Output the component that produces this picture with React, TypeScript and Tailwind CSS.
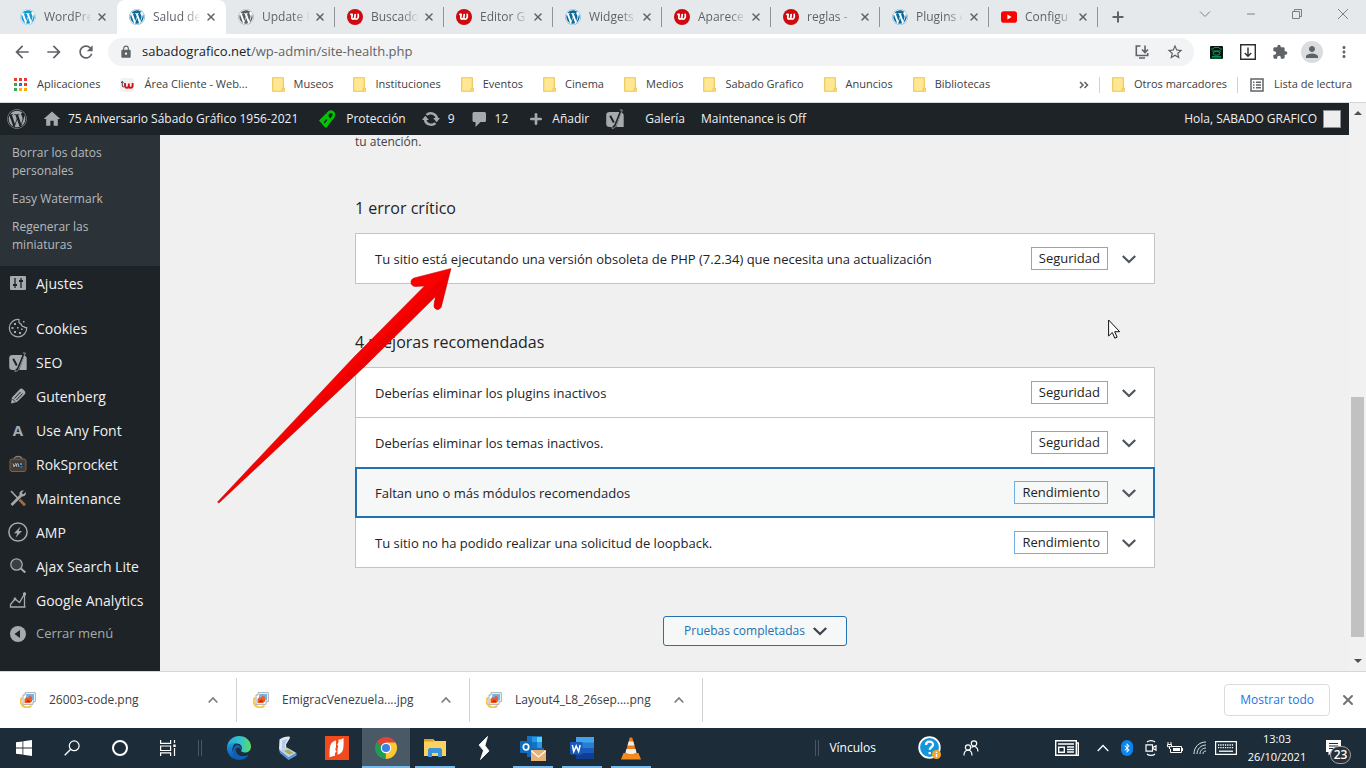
import React from 'react';
import { FaBluetoothB, FaWordpress } from 'react-icons/fa';
import {
  MdArrowBack,
  MdArrowForward,
  MdExtension,
  MdHome,
  MdLock,
  MdMoreVert,
  MdPerson,
  MdRefresh,
  MdStarBorder,
} from 'react-icons/md';
import { Minus, Plus, X } from 'lucide-react';

/* ---------- small drawings ---------- */

const WebempresaIcon = () => (
  <svg viewBox="0 0 16 16" className="size-4 shrink-0">
    <circle cx="8" cy="8" r="8" fill="#cc0a0f" />
    <path d="M3.9 5.4h1.3l-.4 3.3c-.1 1.8 2.3 1.8 2.8 0l.6-3-.4 3c0 1.9 2.5 1.9 3.2 0 .5-1.2.5-2.1.2-3.3" fill="none" stroke="#fff" strokeWidth="1.7" strokeLinecap="round" strokeLinejoin="round" />
  </svg>
);

const YoutubeIcon = () => (
  <svg viewBox="0 0 16 16" className="size-4 shrink-0">
    <rect y="2.3" width="16" height="11.4" rx="2.8" fill="#f00" />
    <path d="M6.4 5.6v4.8L10.6 8z" fill="#fff" />
  </svg>
);

const WpIcon = ({ className }: { className: string }) => (
  <span className={`grid size-4 shrink-0 place-items-center rounded-full bg-white ${className}`}>
    <FaWordpress className="size-4" />
  </span>
);

const FolderIcon = () => (
  <svg viewBox="0 0 13 15" className="h-[15px] w-[13px] shrink-0">
    <path d="M.7.7h10.6v10.6h1v3H.7z" fill="#ffe793" stroke="#ecc652" strokeWidth="1.1" />
    <path d="M10 14V11.4h1.5" fill="none" stroke="#ecc652" />
  </svg>
);

const AppsIcon = () => (
  <svg viewBox="0 0 13 13" className="size-[13px] shrink-0">
    <path d="M0 0h3v3H0zM5 0h3v3H5zM10 0h3v3h-3z" fill="#ea3c2f" />
    <path d="M0 5h3v3H0z" fill="#34a853" />
    <path d="M5 5h3v3H5z" fill="#1a73e8" />
    <path d="M10 5h3v3h-3z" fill="#ea3c2f" />
    <path d="M0 10h3v3H0z" fill="#34a853" />
    <path d="M5 10h3v3H5zM10 10h3v3h-3z" fill="#fbae08" />
  </svg>
);

const ClienteIcon = () => (
  <svg viewBox="0 0 14 14" className="size-3.5 shrink-0">
    <rect width="14" height="14" rx="3" fill="#f1f1f1" />
    <path d="M1 4.4h2.600M2.300 3v4c0 1.500.8 2 1.600 2" fill="none" stroke="#555" strokeWidth="1.100" />
    <path d="M5 5v2.500c0 3 3.600 3 3.800.300V5.500v2.300c.2 2.700 3.800 2.700 3.800-.300V5" fill="none" stroke="#d3121b" strokeWidth="1.900" />
  </svg>
);

const YoastIcon = ({ className }: { className: string }) => (
  <svg viewBox="0 0 20 20" className={className}>
    <path d="M4.500 3h10.200l-5 15H4.500a3.300 3.300 0 0 1-3.300-3.200V6.300A3.300 3.300 0 0 1 4.500 3zM16.400 3.600c1.500.500 2.300 1.500 2.300 3V18h-7.400z" fill="#a7aaad" />
    <path d="M5.200 6.800l3.600 6.700M16.400.8L10.400 15.500c-.7 1.900-1.700 2.700-3.200 2.800" fill="none" stroke="#1d2327" strokeWidth="2" />
    <path d="M14.800 1h2.600L11.300 16c-1 2.500-2 3.200-4.300 3.400V17" fill="none" stroke="#a7aaad" strokeWidth=".8" />
  </svg>
);

const Chevron = ({ className }: { className: string }) => (
  <svg viewBox="0 0 20 20" className={className}>
    <path d="M3.800 7l6.200 6 6.200-6" fill="none" stroke="currentColor" strokeWidth="2.300" />
  </svg>
);

const ShieldLockIcon = () => (
  <svg viewBox="0 0 18 18" className="size-[18px] shrink-0">
    <path d="M1 10.500L8 3.500l6 7-5.500 7H7z" fill="#00c400" />
    <path d="M9.500 6.500c-1-4 3.500-6.500 6-3.500 1.200 2 .3 4-2.500 6.500" fill="none" stroke="#00c400" strokeWidth="2.600" />
    <path d="M6.500 12.500l2-2.500" stroke="#1d2327" strokeWidth="1.500" strokeLinecap="round" />
  </svg>
);

const UpdateIcon = () => (
  <svg viewBox="0 0 20 20" className="size-[18px] shrink-0 text-[#a7aaad]">
    <path d="M5 5.500A7 7 0 0 1 16.700 9.500M15 14.500A7 7 0 0 1 3.300 10.500" fill="none" stroke="currentColor" strokeWidth="2.800" />
    <path d="M12.400 9h7.600L16.300 13.600zM0 11h7.600L3.700 6.400z" fill="currentColor" />
  </svg>
);

const CommentIcon = () => (
  <svg viewBox="0 0 16 16" className="size-4 shrink-0">
    <path d="M3 1h10.500a1.500 1.500 0 0 1 1.500 1.500v7a1.500 1.500 0 0 1-1.500 1.500H9.500l-5 5V11H3a1.500 1.500 0 0 1-1.500-1.500v-7A1.500 1.500 0 0 1 3 1z" fill="#a7aaad" />
  </svg>
);

const PhotoFileIcon = () => (
  <svg viewBox="0 0 16 16" className="size-4 shrink-0">
    <path d="M1.800 5.500C-.5 9.500 1 14.700 6 15.300c2.500.2 4-.3 5.500-1.500" fill="none" stroke="#f6c445" strokeWidth="1.800" />
    <path d="M3 3h2V.700h10.300v9H13v2.600H3z" fill="#fff" stroke="#a5a9ad" strokeWidth="1" />
    <path d="M6.200 2h7.800v6.500H6.200z" fill="#6fb4e8" />
    <path d="M4.500 11V7l2-2 1.500 1L9.700 3.500 12 5v4.500L10 11z" fill="#ee5a24" />
    <path d="M6 9.500l2-2 2 1.500v1H6z" fill="#c33110" />
  </svg>
);

/* ---------- browser chrome ---------- */

const tabs = [
  { title: 'WordPre', icon: <WpIcon className="text-[#1597d4]" /> },
  { title: 'Salud de', icon: <WpIcon className="text-[#0a6a9c]" />, active: true },
  { title: 'Update P', icon: <WpIcon className="text-[#5b5e61]" /> },
  { title: 'Buscado', icon: <WebempresaIcon /> },
  { title: 'Editor G', icon: <WebempresaIcon /> },
  { title: 'Widgets', icon: <WpIcon className="text-[#0a6a9c]" /> },
  { title: 'Aparece', icon: <WebempresaIcon /> },
  { title: 'reglas -', icon: <WebempresaIcon /> },
  { title: 'Plugins ‹', icon: <WpIcon className="text-[#0a6a9c]" /> },
  { title: 'Configu', icon: <YoutubeIcon /> },
];

const TabStrip = () => (
  <div className="flex h-[34px] shrink-0 items-stretch bg-[#e6e9ec] pl-2">
    {tabs.map((tab, i) => (
      <div
        key={tab.title}
        className={`flex w-[109px] items-center pl-3 text-[12px] text-[#5f6368] ${tab.active ? 'rounded-t-lg bg-white' : ''}`}
      >
        {tab.icon}
        <span className="ml-2 w-12 whitespace-nowrap [mask-image:linear-gradient(to_right,black_65%,transparent)]">
          {tab.title}
        </span>
        <button aria-label="Cerrar pestaña" className="ml-0.5 grid size-4 place-items-center text-[#5f6368]">
          <X className="size-3" strokeWidth={3} />
        </button>
        {i > 1 && <span className="ml-auto h-5 w-px bg-[#8f9398]" />}
      </div>
    ))}
    <button aria-label="Nueva pestaña" className="grid w-10 place-items-center text-[#5f6368]">
      <Plus className="size-4" strokeWidth={3} />
    </button>
    <div className="ml-auto flex items-center pb-1.5 text-[#7c8085]">
      <button aria-label="Buscar pestañas" className="grid h-7 w-[46px] place-items-center">
        <svg viewBox="0 0 12 12" className="size-3"><path d="M1 3.500l5 5 5-5" fill="none" stroke="currentColor" /></svg>
      </button>
      <button aria-label="Minimizar" className="grid h-7 w-[46px] place-items-center">
        <Minus className="size-3" strokeWidth={2} />
      </button>
      <button aria-label="Restaurar" className="grid h-7 w-[46px] place-items-center">
        <svg viewBox="0 0 12 12" className="size-3"><path d="M1.500 3.500h7v7h-7zM3.500 3.500v-2h7v7h-2" fill="none" stroke="currentColor" /></svg>
      </button>
      <button aria-label="Cerrar" className="grid h-7 w-[46px] place-items-center">
        <svg viewBox="0 0 12 12" className="size-3"><path d="M1 1l10 10M11 1L1 11" stroke="currentColor" /></svg>
      </button>
    </div>
  </div>
);

const Toolbar = () => (
  <div className="flex h-[35px] shrink-0 items-center bg-white pt-px pr-1.5 pl-1.5 text-[#5f6368]">
    <button aria-label="Atrás" className="grid w-8 place-items-center"><MdArrowBack className="size-5" /></button>
    <button aria-label="Adelante" className="grid w-8 place-items-center"><MdArrowForward className="size-5" /></button>
    <button aria-label="Recargar" className="grid w-8 place-items-center"><MdRefresh className="size-5" /></button>
    <div className="ml-1.5 flex h-7 flex-1 items-center rounded-full bg-[#f1f3f4] pr-2.5 pl-[11px] text-[13px]">
      <MdLock className="size-3.5" />
      <span className="ml-[9px]">
        <span className="text-[#202124]">sabadografico.net</span>/wp-admin/site-health.php
      </span>
      <button aria-label="Instalar" className="ml-auto">
        <svg viewBox="0 0 16 16" className="size-4">
          <path d="M6.500 2H2.300v9.500h11.400V9M11 1.500V8M8 5.500l3 3 3-3M5 14h6" fill="none" stroke="currentColor" strokeWidth="1.600" />
        </svg>
      </button>
      <button aria-label="Añadir a marcadores" className="ml-4"><MdStarBorder className="size-[18px]" /></button>
    </div>
    <div className="ml-1.5 flex items-center">
      <button aria-label="Extensión" className="grid w-8 place-items-center">
        <svg viewBox="0 0 13 13" className="size-[13px]">
          <rect width="13" height="13" rx="1" fill="#06170f" />
          <path d="M1 3h2l1-1.500h5L10 3h2M2 5h9M2 10.500h9M1.500 12h10" stroke="#149a5b" fill="none" strokeWidth=".9" />
          <ellipse cx="6.500" cy="7.300" rx="3.500" ry="1.900" stroke="#149a5b" fill="none" />
        </svg>
      </button>
      <button aria-label="Descargas" className="grid w-8 place-items-center text-[#2c2e31]">
        <svg viewBox="0 0 16 16" className="size-4">
          <path d="M.7.700h14.600v14.600H.700zM8 3.500v8.500M4.800 9L8 12.200 11.200 9" fill="none" stroke="currentColor" strokeWidth="1.400" />
        </svg>
      </button>
      <button aria-label="Extensiones" className="grid w-8 place-items-center"><MdExtension className="size-4" /></button>
      <button aria-label="Perfil" className="grid w-8 place-items-center">
        <span className="grid size-[22px] place-items-center rounded-full bg-[#dadce0]"><MdPerson className="size-[18px]" /></span>
      </button>
      <button aria-label="Menú" className="grid w-8 place-items-center"><MdMoreVert className="size-[18px]" /></button>
    </div>
  </div>
);

const bookmarks = ['Museos', 'Instituciones', 'Eventos', 'Cinema', 'Medios', 'Sabado Grafico', 'Anuncios', 'Bibliotecas'];

const BookmarksBar = () => (
  <nav className="flex h-[34px] shrink-0 items-center border-b border-[#d5d7da] bg-white px-3.5 pb-0.5 text-[11px] whitespace-nowrap text-[#3c4043]">
    <a href="#" className="flex items-center gap-2.5"><AppsIcon />Aplicaciones</a>
    <a href="#" className="mr-1 ml-5 flex items-center gap-2.5"><ClienteIcon />Área Cliente - Web...</a>
    {bookmarks.map((name) => (
      <a key={name} href="#" className="ml-5 flex items-center gap-[9px]"><FolderIcon />{name}</a>
    ))}
    <button aria-label="Más marcadores" className="ml-auto text-[#5f6368]">
      <svg viewBox="0 0 10 8" className="h-2 w-2.5"><path d="M1 1l3 3-3 3M5.500 1l3 3-3 3" fill="none" stroke="currentColor" strokeWidth="1.500" /></svg>
    </button>
    <span className="mr-3 ml-2.5 h-4 w-px bg-[#cfd2d6]" />
    <a href="#" className="flex items-center gap-[9px]"><FolderIcon />Otros marcadores</a>
    <span className="mr-3 ml-2.5 h-4 w-px bg-[#cfd2d6]" />
    <a href="#" className="flex items-center gap-2.5">
      <svg viewBox="0 0 14 14" className="size-3.5 text-[#5f6368]">
        <path d="M1 1h12v12H1zM3 4.300h1.500M6 4.300h5M3 7h1.500M6 7h5M3 9.700h1.500M6 9.700h5" fill="none" stroke="currentColor" strokeWidth="1.500" />
      </svg>
      Lista de lectura
    </a>
  </nav>
);

/* ---------- WordPress admin ---------- */

const AdminBar = () => (
  <div className="flex h-8 shrink-0 items-center bg-[#1d2327] pr-2 pl-[7px] text-[12px] whitespace-nowrap text-[#f0f0f1]">
    <a href="#" aria-label="Acerca de WordPress"><FaWordpress className="size-5 text-[#a7aaad]" /></a>
    <a href="#" className="ml-[15px] flex items-center gap-1.5"><MdHome className="size-5 text-[#a7aaad]" />75 Aniversario Sábado Gráfico 1956-2021</a>
    <a href="#" className="ml-5 flex items-center gap-2.5"><ShieldLockIcon />Protección</a>
    <a href="#" className="ml-4 flex items-center gap-2"><UpdateIcon />9</a>
    <a href="#" className="ml-4 flex items-center gap-2"><CommentIcon />12</a>
    <a href="#" className="ml-5 flex items-center gap-2"><Plus className="size-4 text-[#a7aaad]" strokeWidth={4} />Añadir</a>
    <a href="#" aria-label="SEO" className="ml-4"><YoastIcon className="size-5" /></a>
    <a href="#" className="ml-5">Galería</a>
    <a href="#" className="ml-4">Maintenance is Off</a>
    <a href="#" className="ml-auto flex items-center gap-1.5">
      Hola, SABADO GRAFICO
      <span className="size-[18px] border border-[#8c8f94] bg-[#eee]" />
    </a>
  </div>
);

const menu = [
  {
    label: 'Cookies',
    icon: (
      <svg viewBox="0 0 20 20" className="size-5">
        <path d="M11 1.500a8.700 8.700 0 1 0 7.700 8c-1.200.4-2.300 0-2.800-1-1.500.2-2.600-.6-2.500-2.200-1.800-.5-2.800-2.300-2.400-4.800z" fill="none" stroke="#a7aaad" strokeWidth="1.200" />
        <path d="M6 5h2v2H6zM3.500 9h2v2h-2zM9 9h1.600v1.600H9zM6 13h2v2H6zM11 14h2v2h-2zM13 10.500h1.600v1.600H13zM15 3h1.500v1.500H15z" fill="#a7aaad" />
      </svg>
    ),
  },
  { label: 'SEO', icon: <YoastIcon className="size-5" /> },
  {
    label: 'Gutenberg',
    icon: (
      <svg viewBox="0 0 20 20" className="size-5">
        <path d="M3 17.500l1-6 7.500-8c1-1.100 2.500-1.200 3.500-.2l1.700 1.700c1 1 .9 2.400-.1 3.400L9 16z" fill="#a7aaad" />
        <path d="M6.500 12.500l6-6.500M8.500 14l6-6.500M4.500 13l2.500 2.500" stroke="#1d2327" strokeWidth="1" />
      </svg>
    ),
  },
  { label: 'Use Any Font', icon: <span aria-hidden className="text-[15px] font-bold text-[#a7aaad]">A</span> },
  {
    label: 'RokSprocket',
    icon: (
      <svg viewBox="0 0 18 18" className="size-[18px]">
        <path d="M5 4.500c0-4 8-4 8 0" fill="none" stroke="#85807a" strokeWidth="1.300" />
        <rect x="1" y="4" width="16" height="12.500" rx="2" fill="#4a3c2e" stroke="#7a6248" />
        <rect x="3.500" y="7" width="11" height="6" fill="#35393d" />
        <path d="M4 8.500l1.500 3.500M6.500 8l1.500 4M9 8.500l1 3.500M4 11.500l5-3" stroke="#b5b9bc" strokeWidth="1" />
        <path d="M11 8h2v2h-2z" fill="#3c8fd6" />
        <path d="M11.500 11h2v2h-2z" fill="#3568b9" />
      </svg>
    ),
  },
  {
    label: 'Maintenance',
    icon: (
      <svg viewBox="0 0 18 18" className="size-[18px]">
        <path d="M2.500 16L12 6.500" stroke="#a7aaad" strokeWidth="2.600" />
        <path d="M15 1.500l-2.300 2.300 1.500 1.600L16.700 3c.8 3.200-1.500 5-4.500 4.200L10.500 5.500C10 3 12 .9 15 1.500z" fill="#a7aaad" />
        <path d="M2 2l7.500 8" stroke="#a7aaad" strokeWidth="1.600" />
        <path d="M10.500 10.800l5.500 5.400" stroke="#a4693f" strokeWidth="2.800" />
      </svg>
    ),
  },
  {
    label: 'AMP',
    icon: (
      <svg viewBox="0 0 20 20" className="size-5">
        <circle cx="10" cy="10" r="9.100" fill="none" stroke="#a7aaad" strokeWidth="1.500" />
        <path d="M12.500 4.500L6 11.200h3.300L7.500 15.800 14 9h-3.300z" fill="#a7aaad" />
      </svg>
    ),
  },
  {
    label: 'Ajax Search Lite',
    icon: (
      <svg viewBox="0 0 18 18" className="size-[18px]">
        <circle cx="7.500" cy="7.500" r="5.700" fill="#3a3f44" stroke="#a7aaad" strokeWidth="1.300" />
        <path d="M11.800 11.500l4.500 4" stroke="#a7aaad" strokeWidth="2.200" />
      </svg>
    ),
  },
  {
    label: 'Google Analytics',
    icon: (
      <svg viewBox="0 0 18 18" className="size-[18px]">
        <path d="M1.500 16V13.500L6 8l4.500 3.500L15.500 3v13zM1.500 16h15" fill="none" stroke="#a7aaad" strokeWidth="1.300" />
        <circle cx="15.500" cy="3" r="1.700" fill="#a7aaad" />
        <circle cx="6" cy="8" r="1.400" fill="#a7aaad" />
      </svg>
    ),
  },
];

const MenuItem = ({ label, icon, muted }: { label: string; icon: React.ReactNode; muted?: boolean }) => (
  <a href="#" className={`flex h-[34px] items-center ${muted ? 'text-[13px] text-[#a7aaad]' : 'text-[14px] text-[#f0f0f1]'}`}>
    <span className="grid w-9 place-items-center">{icon}</span>
    {label}
  </a>
);

const Sidebar = () => (
  <nav className="w-40 shrink-0 bg-[#1d2327] whitespace-nowrap">
    <div className="bg-[#2c3338] pt-1 pb-[7px] text-[12px] leading-[18px] text-[#b5b9bd]">
      <a href="#" className="block px-3 py-[5px]">Borrar los datos<br />personales</a>
      <a href="#" className="block px-3 py-[5px]">Easy Watermark</a>
      <a href="#" className="block px-3 py-[5px]">Regenerar las<br />miniaturas</a>
    </div>
    <div className="mb-[11px]">
      <MenuItem
        label="Ajustes"
        icon={
          <svg viewBox="0 0 16 14" className="h-3.5 w-4">
            <rect width="16" height="14" rx="1" fill="#a7aaad" />
            <path d="M5 2v10M11 2v10" stroke="#1d2327" strokeWidth="1.300" />
            <path d="M3 8h4v2H3zM9 4h4v2H9z" fill="#1d2327" />
          </svg>
        }
      />
    </div>
    {menu.map((item) => <MenuItem key={item.label} label={item.label} icon={item.icon} />)}
    <MenuItem
      muted
      label="Cerrar menú"
      icon={
        <svg viewBox="0 0 16 16" className="size-4">
          <circle cx="8" cy="8" r="8" fill="#a7aaad" />
          <path d="M10 4v8L4.500 8z" fill="#1d2327" />
        </svg>
      }
    />
  </nav>
);

type Issue = { title: string; badge: string; focused?: boolean };

const critical: Issue[] = [
  { title: 'Tu sitio está ejecutando una versión obsoleta de PHP (7.2.34) que necesita una actualización', badge: 'Seguridad' },
];

const recommended: Issue[] = [
  { title: 'Deberías eliminar los plugins inactivos', badge: 'Seguridad' },
  { title: 'Deberías eliminar los temas inactivos.', badge: 'Seguridad' },
  { title: 'Faltan uno o más módulos recomendados', badge: 'Rendimiento', focused: true },
  { title: 'Tu sitio no ha podido realizar una solicitud de loopback.', badge: 'Rendimiento' },
];

const IssueList = ({ items }: { items: Issue[] }) => (
  <div className="border-x border-t border-[#c3c4c7]">
    {items.map(({ title, badge, focused }) => (
      <h4 key={title} className="border-b border-[#c3c4c7]">
        <button
          className={`relative flex h-[49px] w-full items-center pr-[15px] pl-[19px] text-left text-[13px] text-[#1d2327] ${
            focused ? 'z-10 bg-[#f6f7f7] outline-2 -outline-offset-1 outline-[#2271b1]' : 'bg-white'
          }`}
        >
          <span className="flex-1 pt-0.5">{title}</span>
          <span className="border border-[#72aee6] px-[7px] leading-[21px]">{badge}</span>
          <Chevron className="ml-[11px] size-5 text-[#50575e]" />
        </button>
      </h4>
    ))}
  </div>
);

const SiteHealth = () => (
  <main className="min-w-0 flex-1 overflow-hidden bg-[#f0f0f0] pl-px">
    <div className="mx-auto max-w-[800px]">
      <p className="text-[12px] leading-[14px] text-[#3c434a]">tu atención.</p>
      <h3 className="mt-[47px] text-[16px] leading-6 text-[#1d2327]">1 error crítico</h3>
      <div className="mt-[13px]"><IssueList items={critical} /></div>
      <h3 className="mt-[46px] text-[16px] leading-6 text-[#1d2327]">4 mejoras recomendadas</h3>
      <div className="mt-[13px]"><IssueList items={recommended} /></div>
      <div className="mt-12 flex justify-center">
        <button className="flex h-[30px] items-center gap-[5px] rounded-[3px] border border-[#2271b1] bg-[#f6f7f7] pr-4 pl-5 text-[12px] text-[#2271b1]">
          Pruebas completadas
          <Chevron className="size-5 text-[#3c434a]" />
        </button>
      </div>
    </div>
  </main>
);

const Scrollbar = () => (
  <div className="flex w-[17px] shrink-0 flex-col items-center bg-[#f1f1f1] py-[7px]">
    <svg viewBox="0 0 8 5" className="h-[5px] w-2"><path d="M0 5l4-4 4 4z" fill="#505050" /></svg>
    <div className="flex w-full flex-1 flex-col items-center">
      <div className="flex-[281]" />
      <div className="w-[13px] flex-[240] bg-[#c1c1c1]" />
      <div className="flex-[22]" />
    </div>
    <svg viewBox="0 0 8 5" className="h-[5px] w-2"><path d="M0 0l4 4 4-4z" fill="#505050" /></svg>
  </div>
);

/* Red pointer drawn over the page, and the mouse cursor */
const Annotations = () => (
  <>
    <svg viewBox="0 0 240 240" className="pointer-events-none absolute top-[162px] left-[215px] z-20 size-60">
      <path
        d="M236 3.500L199 13c-5.500 2-3 9.500 2 8.500l8.500-.500L139 92 2.500 237c.5 1 1.500 1 2 .5L149 102l71.500-70.500-1.500 8.500c-.5 5.500 6.500 6 7.500 1z"
        fill="#fb0000"
        stroke="#a11"
        strokeWidth=".5"
        strokeLinejoin="round"
      />
      <path d="M235 5L3.500 237.500 149 102l71.500-70.500-1.500 8.500c-.5 5.500 6.500 6 7.500 1z" fill="#ea0000" opacity=".75" />
    </svg>
    <svg viewBox="0 0 13 20" className="pointer-events-none absolute top-[216px] left-[1108px] z-20 h-5 w-[13px]">
      <path d="M.6 1v16l3.700-3.500 2.500 5.700 2.300-1-2.400-5.500h5z" fill="#fff" stroke="#111" strokeWidth="1" />
    </svg>
  </>
);

/* ---------- downloads and taskbar ---------- */

const downloads = ['26003-code.png', 'EmigracVenezuela....jpg', 'Layout4_L8_26sep....png'];

const Downloads = () => (
  <div className="flex h-[57px] shrink-0 items-center border-t border-[#d5d7da] bg-white pl-1 text-[12px] text-[#3c4043]">
    {downloads.map((name) => (
      <div key={name} className="flex h-11 w-[233px] items-center border-r border-[#cfd1d3] pr-[18px] pl-4">
        <PhotoFileIcon />
        <span className="ml-[13px] flex-1">{name}</span>
        <button aria-label={`Opciones de ${name}`} className="text-[#7c8085]">
          <svg viewBox="0 0 10 8" className="h-2 w-2.5"><path d="M.700 6.500L5 2l4.300 4.500" fill="none" stroke="currentColor" strokeWidth="1.800" /></svg>
        </button>
      </div>
    ))}
    <button className="mr-2.5 ml-auto h-8 rounded-sm border border-[#dadce0] px-[15px] text-[#1a73e8]">Mostrar todo</button>
    <button aria-label="Cerrar barra" className="mr-2.5 text-[#6f7377]"><X className="size-4" strokeWidth={3} /></button>
  </div>
);

const EdgeIcon = () => (
  <svg viewBox="0 0 24 24" className="size-6">
    <defs>
      <linearGradient id="edgeTop" x1="0" x2="1"><stop stopColor="#2ba7d8" /><stop offset=".6" stopColor="#35c5c9" /><stop offset="1" stopColor="#5fdc5a" /></linearGradient>
      <linearGradient id="edgeLow" x1="0" y1="0" x2="0" y2="1"><stop stopColor="#1a9de0" /><stop offset="1" stopColor="#0c4fa8" /></linearGradient>
    </defs>
    <path d="M0 11C1 4 6 0 12 0c7 0 12 5 12 10.500 0 4-3 6-6 6-2.500 0-4.500-1-3.600-2.500C16 11 14 7.500 9.500 7.500 5 7.500 1 9 0 12z" fill="url(#edgeTop)" />
    <path d="M0 12C0 8.500 4 6.500 8.500 7.200c-3 2-3.800 6-2.300 9.300 2 4.500 7.500 6 14.800 3.300C18.500 23 15 24 12 24 5 24 0 18.500 0 12z" fill="url(#edgeLow)" />
    <path d="M8.800 13c-.3 5.500 4.700 9 12.700 6-3 4.500-8 5.500-11.500 3.800C5 20 4.500 12 9.500 8.500c3 .5 5 2.500 4.900 5.500-.600-1.500-3.500-3.500-5.600-1z" fill="#0d5fb8" />
  </svg>
);

const ChromeIcon = () => (
  <svg viewBox="0 0 22 22" className="size-[22px]">
    <path d="M11 11L1.500 5.500A11 11 0 0 1 20.500 5.500z" fill="#e0443a" />
    <path d="M11 11L1.500 5.500A11 11 0 0 0 11 22l4.500-8z" fill="#1f9d55" />
    <path d="M11 11l-.2 11A11 11 0 0 0 20.500 5.500H11z" fill="#fcc934" />
    <circle cx="11" cy="11" r="5.200" fill="#fff" />
    <circle cx="11" cy="11" r="4.100" fill="#3f7fe8" />
  </svg>
);

const pinned = [
  { name: 'Edge', icon: <EdgeIcon /> },
  {
    name: 'Escáner',
    icon: (
      <svg viewBox="0 0 20 24" className="h-6 w-5">
        <path d="M1.500 3.500C4 1.500 8 .3 11.500.5L12 2 8 8.500 8.500 13 3 15.500 1 13z" fill="#dfe9f5" />
        <path d="M4 4.500l6-2L6.500 8.500 7 12l-3 1z" fill="#b4c9e6" />
        <path d="M1 14l8-2.500 9.500 5.500-8 4.500z" fill="#b9d3ea" />
        <path d="M6 15l4-1.500 5.500 3.500-4.500 1.500z" fill="#b9a748" />
        <path d="M1 14l9.500 7.500V24L2 17zM10.500 21.500l8-4.500v2.500l-8 4.500z" fill="#5b9ae0" />
      </svg>
    ),
  },
  {
    name: 'Nitro',
    icon: (
      <svg viewBox="0 0 24 24" className="size-6">
        <rect width="24" height="24" fill="#f04a1d" />
        <path d="M4.500 21.500c0-5 0-10 1-12.500C6.500 6.500 8.500 5 11 4.500v6.800c-1.200 1.500-.8 3.200.7 4.200-1.500.5-2 2-1.700 4.500-2 0-4 .5-5.500 1.500z" fill="#fff" />
        <path d="M18.500 2c.2 5 .2 9.500-.6 12-.9 2.500-2.900 4-5.400 4.800v-6.300c1.200-1.500.8-3.200-.7-4.200 1.500-.5 2-2 1.700-4.800 2 0 3.500-.5 5-1.500z" fill="#fff" />
      </svg>
    ),
  },
  { name: 'Chrome', icon: <ChromeIcon />, active: true },
  {
    name: 'Explorador',
    open: true,
    icon: (
      <svg viewBox="0 0 22 20" className="h-5 w-[22px]">
        <path d="M0 1h9l2 2h11v15H0z" fill="#f9d262" />
        <path d="M0 1h8.500l1.500 2.500H0z" fill="#e0a11c" />
        <path d="M4 19v-7.500l1.500-1.500h11l1.500 1.500V19h-4v-4H8v4z" fill="#3a94d9" />
      </svg>
    ),
  },
  {
    name: 'Atajo',
    icon: <svg viewBox="0 0 14 24" className="h-6 w-3.5"><path d="M10.500.5L2 9l4.500 5.500L3.500 23.500 12 15 8 9.500z" fill="#fff" stroke="#fff" strokeWidth=".8" /></svg>,
  },
  {
    name: 'Outlook',
    open: true,
    icon: (
      <svg viewBox="0 0 26 25" className="h-[25px] w-[26px]">
        <path d="M7 0h15v13H7z" fill="#1272c4" />
        <path d="M12 1h5v5h-5z" fill="#2a97e0" /><path d="M17 1h5v5h-5z" fill="#58d3f3" /><path d="M17 6h5v6h-5z" fill="#2a97e0" />
        <path d="M7 12h17v9H7z" fill="#1666b5" />
        <rect y="5" width="12" height="12" rx="1" fill="#0f6cbd" />
        <ellipse cx="6" cy="11" rx="2.700" ry="3" fill="none" stroke="#fff" strokeWidth="1.700" />
        <rect x="11" y="14" width="15" height="11" fill="#e8b277" />
        <path d="M11.500 15l7 6 7-6" fill="none" stroke="#fff" strokeWidth="1.200" />
      </svg>
    ),
  },
  {
    name: 'Word',
    open: true,
    icon: (
      <svg viewBox="0 0 24 22" className="h-[22px] w-6">
        <path d="M6 0h18v6H6z" fill="#41a5ee" /><path d="M6 5.500h18V11H6z" fill="#2b7cd3" />
        <path d="M6 11h18v5.500H6z" fill="#185abd" /><path d="M6 16.500h18V22H6z" fill="#103f91" />
        <rect y="5" width="12.500" height="12.500" rx="1" fill="#185abd" />
        <path d="M2.300 8l1.500 6.500L6.200 9l2.400 5.500L10.200 8" fill="none" stroke="#fff" strokeWidth="1.500" />
      </svg>
    ),
  },
  {
    name: 'VLC',
    open: true,
    icon: (
      <svg viewBox="0 0 20 23" className="h-[23px] w-5">
        <path d="M2.500 16h15L20 22.500H0z" fill="#f58a1f" />
        <path d="M8.800.5h2.400l4.800 17H4z" fill="#f47c10" />
        <path d="M7.700 4.500h4.600l1.200 4h-7zM5.500 12h9l1 3.500c-3 2-8 2-11 0z" fill="#eceeef" />
      </svg>
    ),
  },
];

const Taskbar = () => (
  <footer className="flex h-10 shrink-0 items-stretch bg-[#1c2d39] text-[12px] text-white">
    <button aria-label="Inicio" className="grid w-12 place-items-center">
      <svg viewBox="0 0 16 16" className="size-4"><path d="M0 2.300L6.500 1.400v6.100H0zM7.300 1.200L16 0v7.500H7.300zM0 8.500h6.500v6.100L0 13.700zM7.300 8.500H16V16l-8.700-1.200z" fill="#fff" /></svg>
    </button>
    <button aria-label="Buscar" className="grid w-12 place-items-center">
      <svg viewBox="0 0 16 16" className="size-4"><circle cx="10.200" cy="5.800" r="4.900" fill="none" stroke="#fff" strokeWidth="1.200" /><path d="M6.700 9.300L.7 15.300" stroke="#fff" strokeWidth="1.300" /></svg>
    </button>
    <button aria-label="Cortana" className="grid w-12 place-items-center">
      <span className="size-4 rounded-full border-2 border-white" />
    </button>
    <button aria-label="Vista de tareas" className="grid w-12 place-items-center">
      <svg viewBox="0 0 16 16" className="size-4"><path d="M.6 0v3.400h10V0M.6 6h10v4.500H.6zM.6 16v-3.200h10V16M14.500 0v3M14.500 8v8" fill="none" stroke="#fff" strokeWidth="1.200" /><path d="M13.300 4.500h2.400V7h-2.400z" fill="#fff" /></svg>
    </button>
    <span className="ml-1.5 h-4 w-1 self-center border-x border-[#475662]" />
    <div className="ml-[13px] flex gap-px">
      {pinned.map((app) => (
        <button
          key={app.name}
          aria-label={app.name}
          className={`relative grid w-12 place-items-center ${app.active ? 'bg-[#495965]' : ''}`}
        >
          {app.icon}
          {app.active && <span className="absolute inset-x-0 bottom-0 h-0.5 bg-[#76b9ed]" />}
          {app.open && <span className="absolute inset-x-1 bottom-0 h-0.5 bg-[#76b9ed]" />}
        </button>
      ))}
    </div>
    <span className="ml-auto h-4 w-1 self-center border-x border-[#475662]" />
    <span className="ml-2.5 self-center">Vínculos</span>
    <div className="ml-[42px] flex items-center">
      <button aria-label="Ayuda" className="grid w-6 place-items-center">
        <svg viewBox="0 0 24 24" className="size-6">
          <circle cx="11.500" cy="11.500" r="10.300" fill="#1296db" stroke="#fff" strokeWidth="1.800" />
          <path d="M8 9c0-4.500 7-4.500 7-.300 0 2.300-3.300 2.500-3.300 5M11.700 16v2.300" fill="none" stroke="#fff" strokeWidth="2.300" />
          <circle cx="18.500" cy="18.500" r="4.500" fill="#f5a623" /><path d="M18.500 15.800v1.300M18.500 18v3.200" stroke="#fff" strokeWidth="1.400" />
        </svg>
      </button>
      <button aria-label="Contactos" className="ml-[21px]">
        <svg viewBox="0 0 16 16" className="size-4"><circle cx="5" cy="7.500" r="2.600" fill="none" stroke="#fff" strokeWidth="1.200" /><path d="M1 15.500c0-7 8-7 8 0" fill="none" stroke="#fff" strokeWidth="1.200" /><circle cx="11" cy="3.500" r="2.700" fill="none" stroke="#fff" strokeWidth="1.200" /><path d="M8.500 7.500c3-2.300 6.500-.5 6.500 4" fill="none" stroke="#fff" strokeWidth="1.200" /></svg>
      </button>
      <button aria-label="Noticias" className="ml-[76px]">
        <svg viewBox="0 0 24 16" className="h-4 w-6"><path d="M.700.700h20.600v14.600H.700zM21.300 3h2v12.300h-2M3 4h16M12 7h7M12 9.500h7M12 12h7M3.700 7.200h5.600v5H3.700z" fill="none" stroke="#fff" strokeWidth="1.400" /></svg>
      </button>
      <button aria-label="Iconos ocultos" className="ml-[18px]">
        <svg viewBox="0 0 12 8" className="h-2 w-3"><path d="M.700 7L6 1.500 11.300 7" fill="none" stroke="#fff" strokeWidth="1.300" /></svg>
      </button>
      <span className="ml-3 grid h-4 w-3 place-items-center rounded-full bg-[#0a84f0]"><FaBluetoothB className="size-2.5" /></span>
      <svg viewBox="0 0 12 16" className="ml-3 h-4 w-3"><path d="M2 2c2-1.800 6-1.800 8 0M2 14c2 1.800 6 1.800 8 0M1 4.800h6.500v6.400H1zM8 7.500l3-1.700v4.400L8 8.500" fill="none" stroke="#fff" strokeWidth="1.200" /></svg>
      <svg viewBox="0 0 16 14" className="ml-2.5 h-3.5 w-4"><path d="M5 5.500h9.500v6H3.500V8M15.500 7v3M1 1v2M4 1v2M.5 3.500h4v2.200H.500zM2.500 5.700V8" fill="none" stroke="#fff" /><path d="M6 7h7v3H6z" fill="#fff" /></svg>
      <svg viewBox="0 0 14 14" className="ml-2.5 size-3.5"><path d="M1 13C1 6 6 1 13 1M4 13c0-5 4-9 9-9M7 13c0-3.500 2.500-6 6-6M10 13c0-2 1-3 3-3" fill="none" stroke="#dfe3e6" strokeWidth="1" /></svg>
      <svg viewBox="0 0 22 14" className="ml-2 h-3.5 w-[22px]"><path d="M.6.600h20.800v12.800H.600z" fill="none" stroke="#fff" strokeWidth="1.200" /><path d="M3 4h16M3 6.700h16" stroke="#fff" strokeWidth="1.300" strokeDasharray="1.300 1" /><path d="M4 10.200h14" stroke="#fff" strokeWidth="1.300" /></svg>
    </div>
    <div className="ml-2 flex w-16 flex-col justify-center text-center text-[11px] leading-[18px]">
      <span>13:03</span>
      <span>26/10/2021</span>
    </div>
    <button aria-label="Notificaciones" className="relative mr-3.5 ml-[13px] w-[30px]">
      <svg viewBox="0 0 15 16" className="absolute top-3 left-1 h-4 w-[15px]"><path d="M0 0h15v12H6l-3.500 3.500V12H0z" fill="#fff" /><path d="M3 3.500h9M3 6h9M3 8.500h6" stroke="#1c2d39" /></svg>
      <span className="absolute top-[18px] left-2 grid h-[18px] w-[21px] place-items-center rounded-full border border-[#9aa3aa] bg-[#2a3036] text-[12px] leading-none font-semibold">23</span>
    </button>
  </footer>
);

const App: React.FC = () => (
  <div className="flex h-screen flex-col overflow-hidden font-['Open_Sans','Noto_Sans',sans-serif]">
    <TabStrip />
    <Toolbar />
    <BookmarksBar />
    <div className="relative flex min-h-0 flex-1 overflow-hidden">
      <div className="flex min-w-0 flex-1 flex-col">
        <AdminBar />
        <div className="flex min-h-0 flex-1">
          <Sidebar />
          <SiteHealth />
        </div>
      </div>
      <Scrollbar />
      <Annotations />
    </div>
    <Downloads />
    <Taskbar />
  </div>
);

export default App;
